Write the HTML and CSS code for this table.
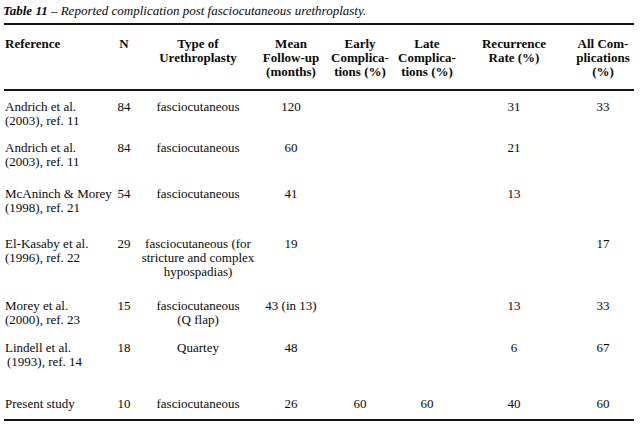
FILE: index.html
```html
<!DOCTYPE html>
<html lang="en">
<head>
<meta charset="utf-8">
<title>Table 11</title>
<link rel="stylesheet" href="styles.css">
</head>
<body>
<div class="page">
  <p class="caption"><b>Table 11</b> &ndash; Reported complication post fasciocutaneous urethroplasty.</p>
  <table class="data">
    <colgroup>
      <col class="c-ref"><col class="c-n"><col class="c-type"><col class="c-mean">
      <col class="c-early"><col class="c-late"><col class="c-rec"><col class="c-all">
    </colgroup>
    <thead>
      <tr>
        <th class="ref">Reference</th>
        <th>N</th>
        <th>Type of<br>Urethroplasty</th>
        <th>Mean<br>Follow-up<br>(months)</th>
        <th>Early<br>Complica-<br>tions (%)</th>
        <th>Late<br>Complica-<br>tions (%)</th>
        <th>Recurrence<br>Rate (%)</th>
        <th>All Com-<br>plications<br>(%)</th>
      </tr>
    </thead>
    <tbody>
      <tr class="r1">
        <td class="ref">Andrich et al.<br>(2003), ref. 11</td>
        <td>84</td><td>fasciocutaneous</td><td>120</td><td></td><td></td><td>31</td><td>33</td>
      </tr>
      <tr class="r2">
        <td class="ref">Andrich et al.<br>(2003), ref. 11</td>
        <td>84</td><td>fasciocutaneous</td><td>60</td><td></td><td></td><td>21</td><td></td>
      </tr>
      <tr class="r3">
        <td class="ref">McAninch &amp; Morey<br>(1998), ref. 21</td>
        <td>54</td><td>fasciocutaneous</td><td>41</td><td></td><td></td><td>13</td><td></td>
      </tr>
      <tr class="r4">
        <td class="ref">El-Kasaby et al.<br>(1996), ref. 22</td>
        <td>29</td><td>fasciocutaneous (for<br>stricture and complex<br>hypospadias)</td><td>19</td><td></td><td></td><td></td><td>17</td>
      </tr>
      <tr class="r5">
        <td class="ref">Morey et al.<br>(2000), ref. 23</td>
        <td>15</td><td>fasciocutaneous<br>(Q flap)</td><td>43 (in 13)</td><td></td><td></td><td>13</td><td>33</td>
      </tr>
      <tr class="r6">
        <td class="ref">Lindell et al.<br><span class="indent">(1993), ref. 14</span></td>
        <td>18</td><td>Quartey</td><td>48</td><td></td><td></td><td>6</td><td>67</td>
      </tr>
      <tr class="r7">
        <td class="ref">Present study</td>
        <td>10</td><td>fasciocutaneous</td><td>26</td><td>60</td><td>60</td><td>40</td><td>60</td>
      </tr>
    </tbody>
  </table>
</div>
</body>
</html>
```

FILE: styles.css
```css
html, body {
  margin: 0;
  padding: 0;
  background: #ffffff;
}

.page {
  width: 640px;
  padding: 4px 0 0 4px;
  font-family: "Liberation Serif", "Times New Roman", serif;
  font-size: 13px;
  line-height: 14px;
  color: #0a0a0a;
}

.caption {
  margin: 0 0 5px -1px;
  font-style: italic;
  font-size: 13px;
}

.caption b {
  font-weight: bold;
}

.data {
  width: 630px;
  table-layout: fixed;
  border-collapse: collapse;
  border-top: 2px solid #151515;
  border-bottom: 2px solid #151515;
}

.c-ref { width: 108px; }
.c-n { width: 24px; }
.c-type { width: 124px; }
.c-mean { width: 62px; }
.c-early { width: 76px; }
.c-late { width: 58px; }
.c-rec { width: 116px; }
.c-all { width: 62px; }

.data th,
.data td {
  padding: 0;
  text-align: center;
  vertical-align: top;
  white-space: nowrap;
}

.data th {
  font-weight: bold;
  padding: 12px 0 10px;
}

.data thead tr {
  border-bottom: 2px solid #151515;
}

.data .ref {
  text-align: left;
  padding-left: 1px;
}

.indent {
  padding-left: 2px;
}

.r1 td { padding-top: 9px; padding-bottom: 13px; }
.r2 td { padding-bottom: 18px; }
.r3 td { padding-bottom: 22px; }
.r4 td { padding-bottom: 20px; }
.r5 td { padding-bottom: 14px; }
.r6 td { padding-bottom: 28px; }
.r7 td { padding-bottom: 8px; }
```
